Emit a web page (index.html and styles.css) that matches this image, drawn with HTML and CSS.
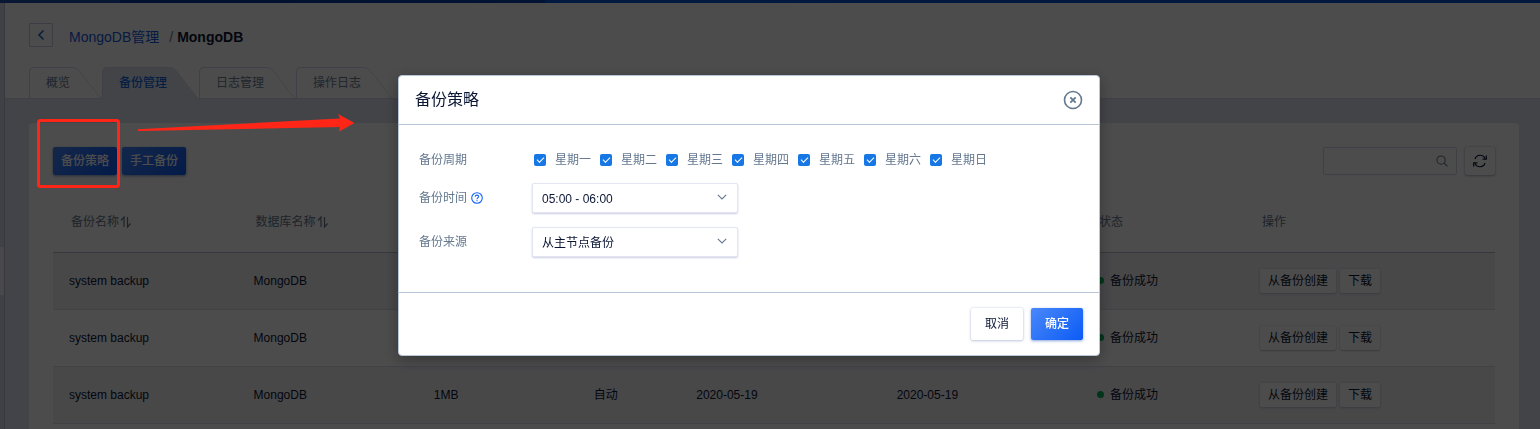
FILE: index.html
```html
<!DOCTYPE html>
<html lang="zh-CN">
<head>
<meta charset="utf-8">
<title>MongoDB</title>
<link rel="stylesheet" href="styles.css">
</head>
<body>
<div class="topbar"></div>
<div class="shell">
  <aside class="side"><span class="side-handle"></span></aside>
  <main class="main">
    <header class="head">
      <div class="crumbs">
        <button class="back" type="button" aria-label="返回">
          <svg width="8" height="12" viewBox="0 0 8 12"><path d="M6.5 1.5 2 6l4.500 4.500" fill="none" stroke="currentColor" stroke-width="1.500"/></svg>
        </button>
        <a class="crumb-link" href="#">MongoDB管理</a>
        <span class="crumb-sep">/</span>
        <strong class="crumb-now">MongoDB</strong>
      </div>
      <nav class="tabs">
        <a class="tab" href="#"><span>概览</span></a>
        <a class="tab tab-active" href="#"><span>备份管理</span></a>
        <a class="tab" href="#"><span>日志管理</span></a>
        <a class="tab" href="#"><span>操作日志</span></a>
      </nav>
    </header>
    <section class="card">
      <div class="toolbar">
        <button class="btn btn-primary" type="button">备份策略</button>
        <button class="btn btn-primary" type="button">手工备份</button>
        <div class="tools">
          <div class="search">
            <input class="search-input" type="text" aria-label="搜索">
            <svg class="search-icon" width="12" height="12" viewBox="0 0 13 13"><circle cx="5.500" cy="5.500" r="4.500" fill="none" stroke="currentColor" stroke-width="1.100"/><path d="m8.800 8.800 3.600 3.600" stroke="currentColor" stroke-width="1.200"/></svg>
          </div>
          <button class="refresh" type="button" aria-label="刷新">
            <svg width="16" height="14" viewBox="0 0 16 14" fill="none" stroke="currentColor" stroke-width="1.200"><path d="M3 5A5.300 5.300 0 0 1 13 4.600M13 9A5.300 5.300 0 0 1 3 9.400"/><path d="M14.300 1.600v3.600h-3.700M1.700 12.400V8.800h3.700"/></svg>
          </button>
        </div>
      </div>
      <table class="grid">
        <colgroup><col class="c-name"><col class="c-db"><col class="c-size"><col class="c-type"><col class="c-date"><col class="c-date"><col class="c-state"><col class="c-ops"></colgroup>
        <thead>
          <tr>
            <th>备份名称<svg class="sort" width="13" height="12" viewBox="0 0 13 12"><path d="M2 4.500 5 1v10M11.500 7.500l-3 3.500V1" fill="none" stroke="currentColor" stroke-width="1.200"/></svg></th>
            <th>数据库名称<svg class="sort" width="13" height="12" viewBox="0 0 13 12"><path d="M2 4.500 5 1v10M11.500 7.500l-3 3.500V1" fill="none" stroke="currentColor" stroke-width="1.200"/></svg></th>
            <th></th><th></th><th></th><th></th><th>状态</th><th>操作</th>
          </tr>
        </thead>
        <tbody>
          <tr><td>system backup</td><td>MongoDB</td><td>1MB</td><td>自动</td><td>2020-05-19</td><td>2020-05-19</td><td><span class="state">备份成功</span></td><td><div class="ops"><button class="mini" type="button">从备份创建</button><button class="mini" type="button">下载</button></div></td></tr>
          <tr><td>system backup</td><td>MongoDB</td><td>1MB</td><td>自动</td><td>2020-05-19</td><td>2020-05-19</td><td><span class="state">备份成功</span></td><td><div class="ops"><button class="mini" type="button">从备份创建</button><button class="mini" type="button">下载</button></div></td></tr>
          <tr><td>system backup</td><td>MongoDB</td><td>1MB</td><td>自动</td><td>2020-05-19</td><td>2020-05-19</td><td><span class="state">备份成功</span></td><td><div class="ops"><button class="mini" type="button">从备份创建</button><button class="mini" type="button">下载</button></div></td></tr>
        </tbody>
      </table>
    </section>
  </main>
</div>

<div class="mask">
  <form class="dialog" role="dialog" aria-labelledby="dlg-title">
    <header class="dialog-head">
      <h2 class="dialog-title" id="dlg-title">备份策略</h2>
      <button class="close" type="button" aria-label="关闭">
        <svg width="20" height="20" viewBox="0 0 20 20" fill="none" stroke="currentColor"><circle cx="10" cy="10" r="8.500" stroke-width="1.600"/><path d="m7.300 7.300 5.400 5.400m0-5.400-5.400 5.400" stroke-width="1.800"/></svg>
      </button>
    </header>
    <div class="dialog-body">
      <span class="label" id="lb-cycle">备份周期</span>
      <div class="days" role="group" aria-labelledby="lb-cycle">
        <label class="day"><input class="tick" type="checkbox" checked>星期一</label>
        <label class="day"><input class="tick" type="checkbox" checked>星期二</label>
        <label class="day"><input class="tick" type="checkbox" checked>星期三</label>
        <label class="day"><input class="tick" type="checkbox" checked>星期四</label>
        <label class="day"><input class="tick" type="checkbox" checked>星期五</label>
        <label class="day"><input class="tick" type="checkbox" checked>星期六</label>
        <label class="day"><input class="tick" type="checkbox" checked>星期日</label>
      </div>
      <label class="label" for="time">备份时间
        <svg class="help" width="12" height="12" viewBox="0 0 12 12" fill="none" stroke="currentColor"><circle cx="6" cy="6" r="5.300" stroke-width="1.100"/><path d="M4.300 4.800C4.300 2.500 7.700 2.600 7.700 4.600 7.700 5.800 6 5.700 6 7.200" stroke-width="1.100"/><path d="M6 8.200v1.100" stroke-width="1.200"/></svg>
      </label>
      <div class="pick">
        <select class="select" id="time"><option>05:00 - 06:00</option></select>
        <svg class="chev" width="10" height="6" viewBox="0 0 10 6"><path d="m.8.8 4.200 4.200L9.200.8" fill="none" stroke="currentColor" stroke-width="1.100"/></svg>
      </div>
      <label class="label" for="source">备份来源</label>
      <div class="pick">
        <select class="select" id="source"><option>从主节点备份</option></select>
        <svg class="chev" width="10" height="6" viewBox="0 0 10 6"><path d="m.8.8 4.200 4.200L9.200.8" fill="none" stroke="currentColor" stroke-width="1.100"/></svg>
      </div>
    </div>
    <footer class="dialog-foot">
      <button class="act" type="button">取消</button>
      <button class="act act-ok" type="submit">确定</button>
    </footer>
  </form>
</div>

<svg class="marks" width="320" height="74" viewBox="0 0 320 74" aria-hidden="true">
  <rect x="2.500" y="4.500" width="80" height="66" rx="2" fill="none" stroke="#ff2617" stroke-width="3"/>
  <path d="M102 13.300 304 2.500 302-2 318.500 7 303 15.500 304 11 102 15z" fill="#ff2617"/>
</svg>
</body>
</html>
```
FILE: styles.css
```css
* { box-sizing: border-box; }

html, body { height: 100%; }

body {
  margin: 0;
  display: flex;
  flex-direction: column;
  overflow: hidden;
  background: #e2e5f1;
  color: #0a1633;
  font: 12px/18px "Liberation Sans", "Noto Sans CJK SC", sans-serif;
}

button, input, select { font: inherit; color: inherit; margin: 0; }
button { padding: 0; border: 0; background: none; }
a { text-decoration: none; }
svg { display: block; }

.topbar {
  flex: none;
  height: 3px;
  background: linear-gradient(90deg, #1c4fb0 120px, #00389c 120px, #0041a8 545px, #0055d8 545px, #0050d0);
}

.shell { flex: 1; display: flex; min-height: 0; isolation: isolate; }

.side {
  flex: none;
  width: 5px;
  padding-top: 244px;
  background: #d6dbe8;
  border-right: 1px solid #bcc0d8;
}
.side-handle { display: block; height: 48px; background: #f4f5fa; }

.main { flex: 1; min-width: 0; display: flex; flex-direction: column; }

.head {
  padding: 20px 24px 0;
  background: #fff;
  border-bottom: 1px solid #d5d8ea;
}

.crumbs { display: flex; align-items: center; font-size: 14px; line-height: 20px; }
.crumb-link, .crumb-sep, .crumb-now { padding-top: 3px; }
.back {
  display: grid;
  place-items: center;
  width: 24px;
  height: 24px;
  margin-right: 16px;
  border: 1px solid #c9cde0;
  border-radius: 1px;
  color: #1c5bd8;
}
.crumb-link { color: #1558e0; }
.crumb-sep { margin: 0 4px 0 10px; color: #6b7a90; }

.tabs { display: flex; margin: 20px 0 -1px; }
.tab {
  position: relative;
  height: 32px;
  padding: 7px 32px 0 17px;
  color: #6c7d94;
}
.tab span { position: relative; z-index: 1; }
.tab::before, .tab::after {
  content: "";
  position: absolute;
  top: 0;
  bottom: 0;
  border-top: 1px solid #d5d8ea;
}
.tab::before {
  left: 0;
  right: 32px;
  border-left: 1px solid #d5d8ea;
  border-top-left-radius: 5px;
}
.tab::after {
  right: 0;
  width: 32px;
  border-right: 1px solid #d5d8ea;
  border-top-right-radius: 5px;
  transform: skewX(38deg);
  transform-origin: right bottom;
}
.tab-active { color: #1167e0; font-weight: 500; }
.tab-active::before, .tab-active::after { background: #e2e5f1; }

.card {
  flex: 1;
  min-height: 0;
  margin: 24px 21px 0 24px;
  padding: 24px 24px 0;
  background: #fff;
  border-radius: 4px 4px 0 0;
}

.toolbar { display: flex; gap: 5px; margin-bottom: 16px; }
.btn { height: 28px; padding: 0 8px; border-radius: 2px; }
.btn-primary {
  background: linear-gradient(135deg, #4584f8, #0b5bf5);
  color: #fff;
  font-weight: 500;
  box-shadow: 0 1px 3px #7d92c8;
}
.tools { display: flex; gap: 8px; margin-left: auto; }
.search { position: relative; }
.search-input {
  width: 134px;
  height: 28px;
  padding: 0 28px 0 8px;
  border: 1px solid #d3d5ec;
  border-radius: 2px;
  background: #fff;
}
.search-icon { position: absolute; right: 9px; top: 8px; color: #64748b; }
.refresh {
  display: grid;
  place-items: center;
  width: 30px;
  height: 28px;
  border-radius: 2px;
  box-shadow: 0 0 3px #c9cbd8, 0 1px 2px #b3b6c6;
}

.grid { width: 100%; table-layout: fixed; border-collapse: collapse; }
.c-name { width: 12.8%; }
.c-db { width: 12.5%; }
.c-size { width: 11.1%; }
.c-type { width: 7.1%; }
.c-date { width: 13.9%; }
.c-state { width: 11.3%; }
.grid th {
  height: 61px;
  padding: 2px 17px 0 18px;
  border-bottom: 1px solid #b7bccf;
  color: #67778d;
  font-weight: 400;
  text-align: left;
}
.grid td { height: 57px; padding: 0 16px; border-bottom: 1px solid #dcdeea; }
.grid tbody tr:nth-child(odd) { background: #f0f0f6; }
.sort { display: inline-block; vertical-align: -2px; }
.state { display: flex; align-items: center; gap: 6px; }
.state::before { content: ""; width: 7px; height: 7px; border-radius: 50%; background: #00b356; }
.ops { display: flex; gap: 4px; }
.mini {
  height: 24px;
  padding: 0 8px;
  border-radius: 2px;
  background: #fff;
  box-shadow: 0 0 2px #d0d2de, 0 1px 2px #c0c3d2;
}

.mask {
  position: fixed;
  inset: 0;
  display: flex;
  justify-content: center;
  align-items: flex-start;
  padding: 75px 42px 0 0;
  background: rgba(0, 0, 0, .7);
}
.dialog {
  width: 702px;
  background: #fff;
  border: 1px solid #b9c6d8;
  border-radius: 4px;
  box-shadow: 0 4px 16px rgba(0, 0, 0, .3);
}
.dialog-head {
  display: flex;
  align-items: center;
  justify-content: space-between;
  padding: 12px 16px;
  border-bottom: 1px solid #b9c6d8;
}
.dialog-title { margin: 0; font-size: 16px; line-height: 24px; font-weight: 400; }
.close { color: #64788f; }
.dialog-body {
  display: grid;
  grid-template-columns: 113px 1fr;
  align-items: center;
  row-gap: 14px;
  padding: 26px 20px 35px;
}
.label { display: flex; align-items: center; gap: 4px; color: #64788f; }
.help { color: #1664f5; }
.days { display: flex; gap: 9px; padding-left: 2px; color: #64788f; }
.day { display: flex; align-items: center; gap: 9px; }
.tick {
  appearance: none;
  display: grid;
  place-items: center;
  width: 12px;
  height: 12px;
  border-radius: 2px;
  background: #1677e5;
}
.tick::before {
  content: "";
  width: 6px;
  height: 3px;
  margin-bottom: 2px;
  border: solid #fff;
  border-width: 0 0 1px 1px;
  transform: rotate(-45deg);
}
.pick { position: relative; width: 206px; }
.select {
  appearance: none;
  display: block;
  width: 100%;
  height: 30px;
  padding: 1px 28px 0 9px;
  border: 1px solid #e3e6f2;
  border-radius: 2px;
  background: #fff;
  box-shadow: 0 1px 2px #c9cfe2;
}
.chev { position: absolute; right: 11px; top: 11px; color: #64788f; pointer-events: none; }
.dialog-foot {
  display: flex;
  justify-content: flex-end;
  gap: 8px;
  padding: 15px 16px;
  border-top: 1px solid #b9c6d8;
}
.act {
  height: 32px;
  padding: 0 14px;
  border-radius: 2px;
  background: #fff;
  box-shadow: 0 0 2px #c9cce0, 0 1px 3px #c4c9de;
}
.act-ok {
  background: linear-gradient(135deg, #4a88fa, #0b5bf5);
  color: #fff;
  font-weight: 500;
  box-shadow: 0 1px 3px #8ba4dc;
}

.marks { position: fixed; left: 36px; top: 116px; overflow: visible; pointer-events: none; }
```
